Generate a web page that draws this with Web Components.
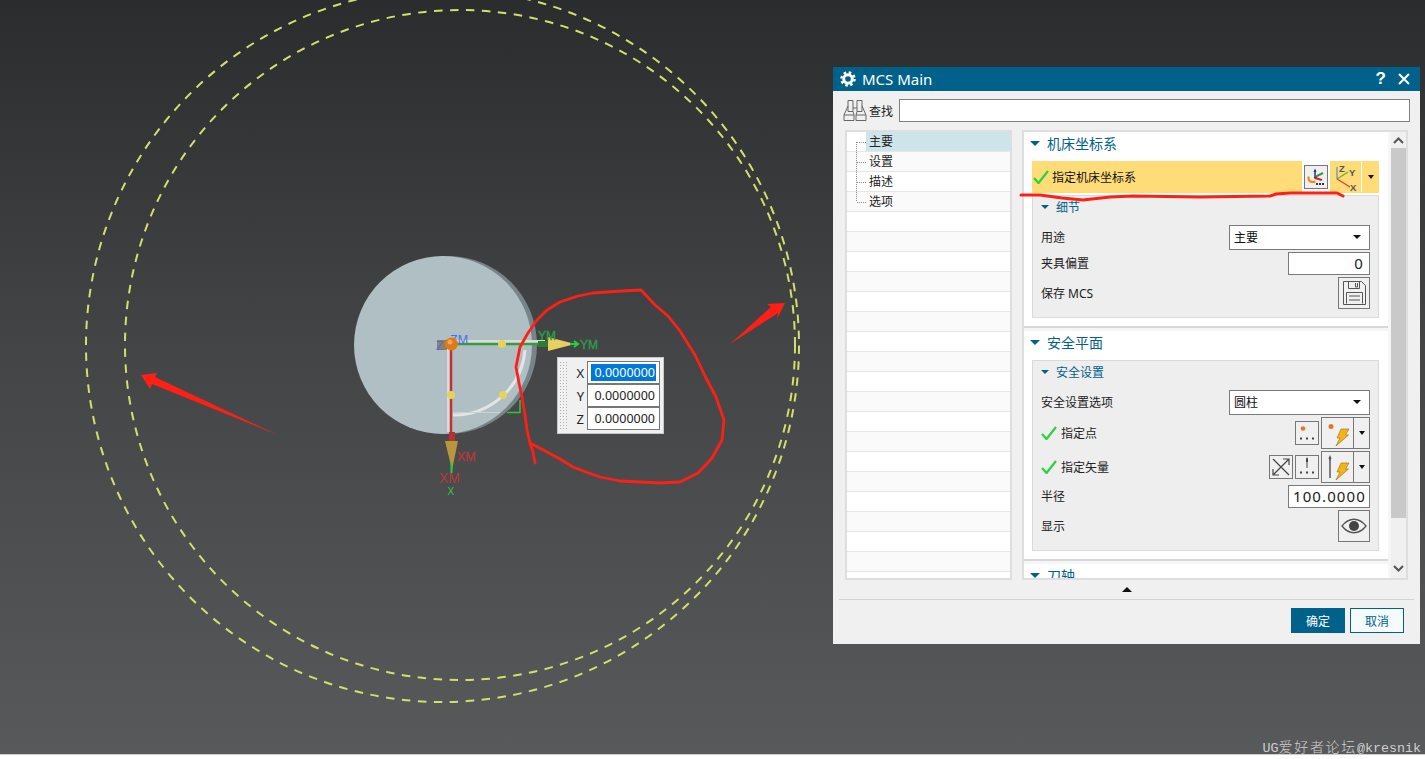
<!DOCTYPE html>
<html lang="zh">
<head>
<meta charset="utf-8">
<title>MCS Main</title>
<style>
  html, body { margin: 0; height: 100%; overflow: hidden; background: #fff; }
  body { font: 12px "Noto Sans", "Noto Sans CJK SC", sans-serif; color: #222; }
</style>
</head>
<body>
<cad-desktop>
  <cad-viewport></cad-viewport>
  <coord-popup></coord-popup>
  <mcs-dialog>
    <cad-section title="机床坐标系">
      <csys-row label="指定机床坐标系"></csys-row>
      <cad-group title="细节">
        <cad-row label="用途"><cad-select value="主要"></cad-select></cad-row>
        <cad-row label="夹具偏置"><cad-field value="0" align="right"></cad-field></cad-row>
        <cad-row label="保存 MCS"><tool-btn icon="save" size="32"></tool-btn></cad-row>
      </cad-group>
    </cad-section>
    <cad-section title="安全平面">
      <cad-group title="安全设置">
        <cad-row label="安全设置选项"><cad-select value="圆柱"></cad-select></cad-row>
        <cad-row label="指定点" checked>
          <tool-btn icon="pointDots"></tool-btn>
          <split-btn icon="pointBolt"></split-btn>
        </cad-row>
        <cad-row label="指定矢量" checked>
          <tool-btn icon="cross"></tool-btn>
          <tool-btn icon="vectorDots"></tool-btn>
          <split-btn icon="vectorBolt"></split-btn>
        </cad-row>
        <cad-row label="半径"><cad-field value="100.0000"></cad-field></cad-row>
        <cad-row label="显示"><tool-btn icon="eye" size="32"></tool-btn></cad-row>
      </cad-group>
    </cad-section>
    <cad-section title="刀轴"></cad-section>
  </mcs-dialog>
  <red-marks></red-marks>
  <water-mark></water-mark>
</cad-desktop>

<script>
const BOLT = `<path d="M20 12h8l-3.500 6h3L15 29l4-8h-3z" fill="#f5b416" stroke="#a07a20" stroke-width=".7"/>`

const ICONS = {
    gear: `<svg width="16" height="16" viewBox="0 0 16 16" fill="none" stroke="#fff"><circle cx="8" cy="8" r="4.300" stroke-width="3"/><circle cx="8" cy="8" r="6.500" stroke-width="2.500" stroke-dasharray="2.500 2.600"/></svg>`,
    close: `<svg width="12" height="12" viewBox="0 0 12 12" stroke="#fff" stroke-width="2"><path d="M1 1l10 10M11 1L1 11"/></svg>`,
    binoculars: `<svg width="24" height="23" viewBox="0 0 24 23" fill="none" stroke="#666"><path d="M5 1.500h5v11H5zM14 1.500h5v11h-5zM5 7L1 16v5.500h10V16l-1-3.500M19 7l4 9v5.500H13V16l1-3.500M1 16h10M13 16h10M10 9h4"/></svg>`,
    check: `<svg width="16" height="14" viewBox="0 0 16 14" fill="none" stroke="#2fd23c" stroke-width="2.300"><path d="M1 8l4.500 5L15 1"/></svg>`,
    csys: `<svg width="22" height="22" viewBox="0 0 22 22" fill="none"><path d="M10 11V4" stroke="#2230a8" stroke-width="1.500"/><path d="M8.500 6L10 2.500 11.500 6z" fill="#2230a8"/><path d="M10 11l8-4" stroke="#35a035" stroke-width="2"/><path d="M10 12l7 2" stroke="#c92b2b" stroke-width="2"/><path d="M3.500 10.500C3 15 6 17 10.500 15.500" stroke="#ef8c1d" stroke-width="2.200"/><rect x="9" y="10.500" width="3" height="2" fill="#b51f1f"/><path d="M11 17h2v2h-2zM14 17h2v2h-2zM17 17h2v2h-2z" fill="#333"/></svg>`,
    axes: `<svg width="28" height="32" viewBox="0 0 28 32" fill="none"><path d="M7 18V6" stroke="#3f7fc0"/><path d="M7 18l11-7" stroke="#5fb52f" stroke-width="1.300"/><path d="M7 18l13 8" stroke="#e8343a" stroke-width="1.300"/><g font-family="Liberation Sans" font-size="9.500" font-weight="700" fill="#555"><text x="9" y="11" stroke="none">Z</text><text x="19" y="15" stroke="none">Y</text><text x="20" y="29.500" stroke="none">X</text></g></svg>`,
    save: `<svg width="30" height="30" viewBox="0 0 30 30" fill="none" stroke="#555"><path d="M4.500 3.500h18l4 4v19h-22z"/><path d="M9.500 3.500v7h11v-7M16.500 5v4h2V5M7.500 25.500v-11h16v11M10 18h11M10 22h11"/></svg>`,
    pointDots: `<svg width="22" height="22" viewBox="0 0 22 22"><circle cx="7" cy="6.500" r="2.300" fill="#e8761f"/><path d="M4 15.500h2v2H4zM10 15.500h2v2h-2zM16 15.500h2v2h-2z" fill="#444"/></svg>`,
    vectorDots: `<svg width="22" height="22" viewBox="0 0 22 22" fill="#444"><path d="M10 3l1-2 1 2v3h-2zM10.500 6h1v6h-1zM4 15.500h2v2H4zM10 15.500h2v2h-2zM16 15.500h2v2h-2z"/></svg>`,
    cross: `<svg width="22" height="22" viewBox="0 0 22 22" fill="none" stroke="#444" stroke-width="1.200"><path d="M3 3l16 16M19 3L3 19M13 3h6v6M3 13v6h6"/></svg>`,
    eye: `<svg width="30" height="30" viewBox="0 0 30 30"><path d="M3 15C10 6 20 6 27 15 20 24 10 24 3 15z" fill="none" stroke="#555" stroke-width="1.300"/><circle cx="15" cy="15" r="5" fill="#444"/></svg>`,
    pointBolt: `<svg width="32" height="32" viewBox="0 0 32 32"><circle cx="10" cy="9.500" r="2.500" fill="#e8761f"/>${BOLT}</svg>`,
    vectorBolt: `<svg width="32" height="32" viewBox="0 0 32 32"><path d="M9 27V9" stroke="#333" stroke-width="1.200"/><path d="M9 4l1.500 3.500L9 10 7.500 7.500z" fill="#555"/>${BOLT}</svg>`
}

class CadDesktop extends HTMLElement {
    constructor() {
        super()
        this.attachShadow({mode: "open"}).innerHTML = `
        <style>
            :host { display: flex; flex-direction: column; height: 759px; position: relative; overflow: hidden; }
            .screen { flex: 1; position: relative; }
            .strip { height: 4px; background: #fff; border-top: 1px solid #cfcfcf; }
        </style>
        <div class="screen"><slot></slot></div>
        <div class="strip"></div>`
    }
}

class CadViewport extends HTMLElement {
    constructor() {
        super()
        this.attachShadow({mode: "open"}).innerHTML = `
        <style>
            :host { display: block; position: absolute; inset: 0; background: linear-gradient(#2b2c2e 0, #434446 45%, #58595b 100%); }
            svg { display: block; }
            text { font-family: "Liberation Sans", sans-serif; font-size: 14px; }
        </style>
        <svg width="1425" height="754" viewBox="0 0 1425 754" fill="none">
            <g stroke="#d5de6a" stroke-width="2" stroke-dasharray="8.500 7.500">
                <circle cx="442.500" cy="345.500" r="356.500"/>
                <circle cx="460" cy="345" r="335"/>
            </g>
            <circle cx="448" cy="345" r="89" fill="#77858a"/>
            <circle cx="443" cy="345" r="89" fill="#b0bfc3"/>

            <path d="M451 342h94" stroke="#d8dcdc" stroke-width="4"/>
            <path d="M449 344v88" stroke="#d8dcdc" stroke-width="4"/>
            <path d="M453 415A71 71 0 0 0 525 350" stroke="#e3e4e4" stroke-width="3"/>
            <path d="M453 412.500H500" stroke="#c8d0d0"/>
            <path d="M507 412.500H520V400" stroke="#33c433" stroke-width="1.500"/>

            <path d="M451 344h94" stroke="#3a9a3a" stroke-width="2.500"/>
            <path d="M538 344h10" stroke="#2c7d32" stroke-width="6"/>
            <path d="M548 337v14l27-7z" fill="#e8cf60"/>
            <path d="M570 344h8M574 341l4 3-4 3" stroke="#25d040" stroke-width="2"/>

            <path d="M451 344v88" stroke="#c43030" stroke-width="2.500"/>
            <path d="M452 432v10" stroke="#b83030" stroke-width="6"/>
            <path d="M445 441h13l-6 29z" fill="#b8963c"/>
            <path d="M451.500 462v11" stroke="#25d040" stroke-width="2"/>

            <rect x="437" y="340" width="10" height="10" fill="#8d8060"/>
            <text x="436" y="350" fill="#4a6ee8" style="font-size:12px">Z</text>
            <text x="450" y="344" fill="#4a6ee8" style="font-size:12.500px">ZM</text>
            <circle cx="451.500" cy="344" r="6.500" fill="#e07a18"/>
            <circle cx="450" cy="342" r="2.500" fill="#f2a552"/>
            <g fill="#e6d35a">
                <circle cx="502" cy="344" r="4"/>
                <circle cx="451" cy="395" r="4"/>
                <circle cx="503" cy="395" r="4"/>
            </g>
            <text x="538" y="340" fill="#2f9c47" stroke="#2f9c47" stroke-width=".4" style="font-size:12px">YM</text>
            <text x="580" y="349" fill="#2f9c47" stroke="#2f9c47" stroke-width=".4" style="font-size:12px">YM</text>
            <text x="457" y="461" fill="#b53a3a" stroke="#b53a3a" stroke-width=".3" style="font-size:12.500px">XM</text>
            <text x="439" y="483" fill="#b53a3a">XM</text>
            <text x="447.500" y="495" fill="#25d040" style="font-size:10px">X</text>
        </svg>`
    }
}

class CoordPopup extends HTMLElement {
    constructor() {
        super()
        const rows = [["X", true], ["Y"], ["Z"]].map(([name, on]) => `
            <span class="name">${name}</span>
            <span class="cell"><span class="${on ? "sel" : ""}">0.0000000</span></span>`).join("")
        this.attachShadow({mode: "open"}).innerHTML = `
        <style>
            :host { display: block; position: absolute; left: 557px; top: 357px; width: 107px; height: 77px; box-sizing: border-box;
                background: #f0f0f0; border: 1px solid #c8c8c8; }
            .wrap { display: grid; grid-template-columns: 8px 1fr; height: 100%; padding: 3px 3px 3px 1px; box-sizing: border-box; }
            .grip { background-image: radial-gradient(#b0b0b0 0.9px, transparent 1px); background-size: 3px 3px; }
            .rows { display: grid; grid-template-columns: 20px 1fr; grid-auto-rows: 23px; align-items: center; font-size: 13px; }
            .name { text-align: right; padding-right: 3px; color: #222; }
            .cell { height: 23px; box-sizing: border-box; border: 1px solid #777; background: #fff; padding: 2px 3px; display: flex; justify-content: flex-end; align-items: center; }
            .cell span { height: 17px; line-height: 17px; flex: 1; text-align: right; font-size: 12.500px; padding-right: 1px; }
            .sel { background: #0078d7; color: #fff; }
        </style>
        <div class="wrap"><div class="grip"></div><div class="rows">${rows}</div></div>`
    }
}

class McsDialog extends HTMLElement {
    constructor() {
        super()
        this.attachShadow({mode: "open"}).innerHTML = `
        <style>
            :host { display: block; position: absolute; left: 833px; top: 67px; width: 587px; height: 577px; background: #f0f0f0; }
            .titlebar { height: 24px; background: #00618a; color: #fff; display: flex; align-items: center; padding: 0 10px 0 7px; gap: 6px; }
            .titlebar b { font-weight: 400; font-size: 15px; flex: 1; }
            .titlebar i { font: 700 17px "Liberation Sans", sans-serif; margin-right: 6px; }
            .find { display: flex; align-items: center; height: 39px; padding: 0 10px; gap: 2px; }
            .find span { width: 28px; }
            .find div { flex: 1; height: 23px; box-sizing: border-box; margin-top: -1px; background: #fff; border: 1px solid #808080; }
            .body { display: grid; grid-template-columns: 167px 386px; gap: 10px; height: 450px; padding-left: 12px; }
            .panel { display: grid; grid-template-columns: 364px 15px; gap: 3px; box-sizing: border-box; height: 450px; border: 2px solid #dedede; background: #f6f6f6; overflow: hidden; }
            .scroll { overflow: hidden; height: 446px; }
            .bar { display: flex; flex-direction: column; align-items: center; background: #f0f0f0; }
            .up, .down { height: 16px; display: flex; align-items: center; justify-content: center; flex: none; }
            .thumb { height: 370px; width: 100%; background: #c9c9c9; flex: none; }
            .down { margin-top: auto; height: 20px; }
            .more { display: flex; justify-content: center; align-items: center; height: 19px; }
            .more::before { content: ""; border: 5px solid transparent; border-top: 0; border-bottom: 5px solid #111; }
            .line { height: 1px; background: #d4d4d4; margin: 0 6px; }
            .actions { display: flex; justify-content: flex-end; gap: 5px; padding: 8px 16px 0 0; }
            button { width: 54px; height: 25px; font: inherit; box-sizing: border-box; border: 1px solid #00618a; padding: 0; }
            .ok { background: #00618a; color: #fff; }
            .cancel { background: #f5fbfd; color: #00618a; }
        </style>
        <div class="titlebar">
            ${ICONS.gear}<b>MCS Main</b><i>?</i>${ICONS.close}
        </div>
        <div class="find">${ICONS.binoculars}<span>查找</span><div></div></div>
        <div class="body">
            <nav-tree></nav-tree>
            <div class="panel">
                <div class="scroll"><slot></slot></div>
                <div class="bar">
                    <div class="up"><svg width="11" height="7" viewBox="0 0 11 7" fill="none" stroke="#555" stroke-width="2"><path d="M1 6l4.500-4.500L10 6"/></svg></div>
                    <div class="thumb"></div>
                    <div class="down"><svg width="11" height="7" viewBox="0 0 11 7" fill="none" stroke="#555" stroke-width="2"><path d="M1 1l4.500 4.500L10 1"/></svg></div>
                </div>
            </div>
        </div>
        <div class="more"></div>
        <div class="line"></div>
        <div class="actions"><button class="ok">确定</button><button class="cancel">取消</button></div>`
    }
}

class NavTree extends HTMLElement {
    constructor() {
        super()
        const names = ["主要", "设置", "描述", "选项"]
        let rows = ""
        for (let i = 0; i < 22; i++) {
            const cls = (i === 0 ? "on " : "") + (i % 2 ? "alt" : "")
            rows += `<div class="row ${cls}"><span>${names[i] || ""}</span></div>`
        }
        this.attachShadow({mode: "open"}).innerHTML = `
        <style>
            :host { display: block; position: relative; box-sizing: border-box; height: 450px; border: 2px solid #dedede; background: #fff; overflow: hidden; }
            .row { height: 19px; line-height: 19px; border-bottom: 1px solid #e6e6e6; padding-left: 19px; }
            .alt { background: #fafafa; }
            .row span { display: block; height: 19px; padding-left: 3px; }
            .on span { background: #cde4ea; }
            svg { position: absolute; left: 0; top: 0; }
        </style>
        ${rows}
        <svg width="30" height="80" fill="none" stroke="#8a8a8a" stroke-dasharray="1 1">
            <path d="M9.500 10v60M10 10.500h9M10 30.500h9M10 50.500h9M10 70.500h9"/>
        </svg>`
    }
}

class CadSection extends HTMLElement {
    constructor() {
        super()
        this.attachShadow({mode: "open"}).innerHTML = `
        <style>
            :host { display: block; background: #fff; border-bottom: 2px solid #d8d8d8; margin-bottom: 3px; }
            .head { display: flex; align-items: center; gap: 7px; height: 22px; margin-bottom: 7px; padding-left: 6px; color: #00618a; font-size: 14px; }
            .head::before { content: ""; border: 5px solid transparent; border-bottom: 0; border-top: 5px solid #00618a; }
            .content { padding: 0 9px 8px 8px; display: flex; flex-direction: column; gap: 2px; }
        </style>
        <div class="head">${this.getAttribute("title")}</div>
        <div class="content"><slot></slot></div>`
    }
}

class CadGroup extends HTMLElement {
    constructor() {
        super()
        this.attachShadow({mode: "open"}).innerHTML = `
        <style>
            :host { display: block; box-sizing: border-box; background: #eee; border: 1px solid #dadada; padding: 0 8px 8px; }
            .head { display: flex; align-items: center; gap: 7px; height: 22px; margin-bottom: 7px; color: #00618a; }
            .head::before { content: ""; border: 4px solid transparent; border-bottom: 0; border-top: 4px solid #00618a; }
            .rows { display: flex; flex-direction: column; gap: 2px; }
        </style>
        <div class="head">${this.getAttribute("title")}</div>
        <div class="rows"><slot></slot></div>`
    }
}

class CsysRow extends HTMLElement {
    constructor() {
        super()
        this.attachShadow({mode: "open"}).innerHTML = `
        <style>
            :host { display: flex; height: 32px; gap: 2px; background: #fff; }
            .main { flex: 1; background: #fedd78; display: flex; align-items: center; gap: 3px; padding-left: 1px; color: #111; }
            .btn { align-self: center; }
            .pick { width: 49px; background: #fedd78; display: flex; align-items: center; }
            .pick .ax { width: 31px; height: 32px; }
            .pick .sep { width: 1px; height: 30px; background: #fff; }
            .pick .caret { flex: 1; display: flex; justify-content: center; }
            .caret::before { content: ""; border: 3.500px solid transparent; border-bottom: 0; border-top: 4px solid #111; }
        </style>
        <div class="main">${ICONS.check}<span>${this.getAttribute("label")}</span></div>
        <tool-btn class="btn" icon="csys"></tool-btn>
        <div class="pick"><div class="ax">${ICONS.axes}</div><div class="sep"></div><div class="caret"></div></div>`
    }
}

class CadRow extends HTMLElement {
    constructor() {
        super()
        const check = this.hasAttribute("checked") ? ICONS.check : ""
        this.attachShadow({mode: "open"}).innerHTML = `
        <style>
            :host { display: flex; align-items: center; justify-content: space-between; color: #222; }
            .label { display: flex; align-items: center; gap: 4px; padding-bottom: 1px; }
            .tools { display: flex; align-items: center; gap: 2px; }
        </style>
        <div class="label">${check}<span>${this.getAttribute("label")}</span></div>
        <div class="tools"><slot></slot></div>`
    }
}

class CadSelect extends HTMLElement {
    constructor() {
        super()
        this.attachShadow({mode: "open"}).innerHTML = `
        <style>
            :host { display: flex; align-items: center; justify-content: space-between; box-sizing: border-box; width: 141px; height: 25px; padding: 0 8px 1px 4px; background: #fff; border: 1px solid #7a7a7a; color: #111; }
            i { border: 4px solid transparent; border-bottom: 0; border-top: 4.500px solid #111; }
        </style>
        <span>${this.getAttribute("value")}</span><i></i>`
    }
}

class CadField extends HTMLElement {
    constructor() {
        super()
        const right = this.getAttribute("align") === "right"
        this.attachShadow({mode: "open"}).innerHTML = `
        <style>
            :host { display: block; box-sizing: border-box; width: 82px; height: 23px; padding: ${right ? "0 5px 0 0" : "0 1px 0 4px"}; background: #fff; border: 1px solid #7a7a7a; overflow: hidden; }
            div { font: 15px/21px "Noto Sans", sans-serif; letter-spacing: 1.100px; text-align: ${right ? "right" : "left"}; white-space: nowrap; color: #1a1a1a; }
        </style>
        <div>${this.getAttribute("value")}</div>`
    }
}

class ToolBtn extends HTMLElement {
    constructor() {
        super()
        const size = this.getAttribute("size") || 24
        this.attachShadow({mode: "open"}).innerHTML = `
        <style>
            :host { display: flex; align-items: center; justify-content: center; box-sizing: border-box; width: ${size}px; height: ${size}px; background: #f0f0f0; border: 1px solid #777; }
            svg { display: block; }
        </style>
        ${ICONS[this.getAttribute("icon")]}`
    }
}

class SplitBtn extends HTMLElement {
    constructor() {
        super()
        this.attachShadow({mode: "open"}).innerHTML = `
        <style>
            :host { display: flex; box-sizing: border-box; width: 49px; height: 32px; background: #f0f0f0; border: 1px solid #777; }
            .ico { width: 31px; border-right: 1px solid #777; overflow: hidden; }
            .ico svg { display: block; margin: -1px; }
            .caret { flex: 1; display: flex; align-items: center; justify-content: center; }
            .caret::before { content: ""; border: 3.500px solid transparent; border-bottom: 0; border-top: 4px solid #111; }
        </style>
        <div class="ico">${ICONS[this.getAttribute("icon")]}</div><div class="caret"></div>`
    }
}

class RedMarks extends HTMLElement {
    constructor() {
        super()
        this.attachShadow({mode: "open"}).innerHTML = `
        <style>
            :host { display: block; position: absolute; inset: 0; pointer-events: none; }
            svg { display: block; }
        </style>
        <svg width="1425" height="754" viewBox="0 0 1425 754" fill="none">
            <path d="M141 375L157 373 155 377 278 435 152 384 150 389z" fill="#ff2015"/>
            <path d="M785 303L767 304 771 307 730 344 778 313 777 319z" fill="#ff2015"/>
            <g stroke="#ff2015" stroke-width="3" stroke-linejoin="round" stroke-linecap="round">
                <path d="M1021 195L1040 195 1062 198 1083 200 1110 197 1133 196 1200 197 1270 196 1276 194 1290 193 1337 193 1343 196"/>
                <path d="M641 290L622 291 593 293 578 296 560 302 547 310 537 320 528 333 520 347 516 367 519 383 522 397 525 415 527 430 530 443 533 452 535 463M530 443L547 452 560 459 573 467 586 472 600 477 620 481 640 482 660 483 680 482 698 473 712 458 722 440 724 420 716 397 706 378 695 355 680 331 668 316 655 305 641 290" stroke-width="2.800"/>
            </g>
        </svg>`
    }
}

class WaterMark extends HTMLElement {
    constructor() {
        super()
        this.attachShadow({mode: "open"}).innerHTML = `
        <style>
            :host { display: block; position: absolute; right: 4px; bottom: 0; height: 16px; white-space: nowrap; color: #cfcfcf; font: 13.330px/16px "Liberation Mono", monospace; }
            .cn { font: 300 14px/16px "Noto Sans CJK SC", sans-serif; letter-spacing: 1.700px; }
        </style>
        UG<span class="cn">爱好者论坛</span>@kresnik`
    }
}

customElements.define("tool-btn", ToolBtn)
customElements.define("split-btn", SplitBtn)
customElements.define("nav-tree", NavTree)
customElements.define("cad-select", CadSelect)
customElements.define("cad-field", CadField)
customElements.define("cad-row", CadRow)
customElements.define("csys-row", CsysRow)
customElements.define("cad-group", CadGroup)
customElements.define("cad-section", CadSection)
customElements.define("mcs-dialog", McsDialog)
customElements.define("coord-popup", CoordPopup)
customElements.define("cad-viewport", CadViewport)
customElements.define("red-marks", RedMarks)
customElements.define("water-mark", WaterMark)
customElements.define("cad-desktop", CadDesktop)
</script>
</body>
</html>
